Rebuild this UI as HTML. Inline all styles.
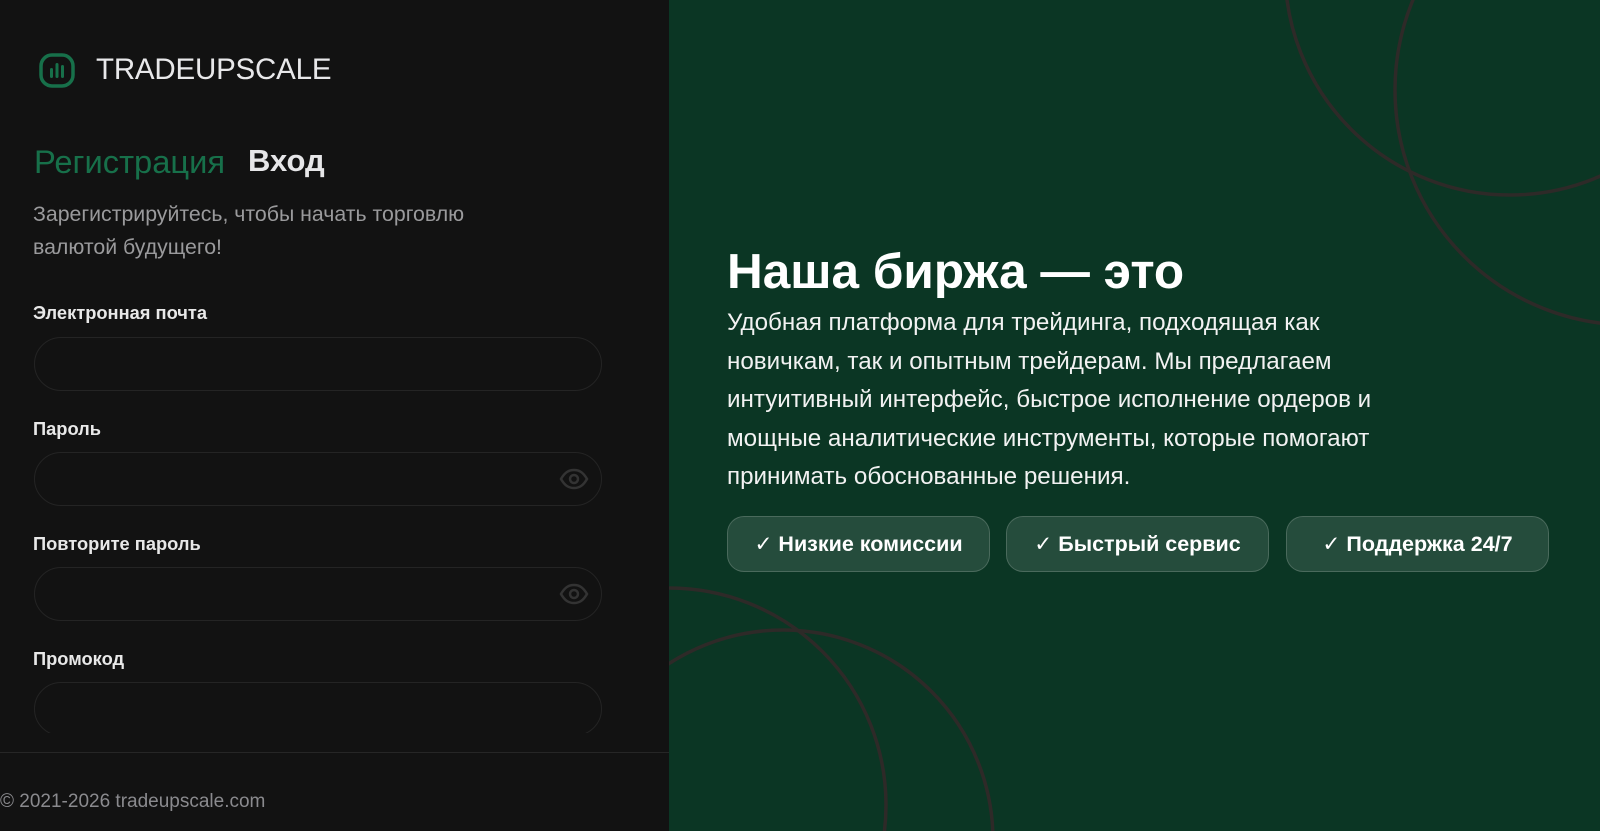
<!DOCTYPE html>
<html><head><meta charset="utf-8"><style>
*{margin:0;padding:0;box-sizing:border-box}
html,body{width:1600px;height:831px;overflow:hidden;background:#121212;font-family:"Liberation Sans","DejaVu Sans",sans-serif;position:relative}
.left{position:absolute;left:0;top:0;width:669px;height:831px;background:#121212;overflow:hidden}
.right{position:absolute;left:669px;top:0;width:931px;height:831px;background:#0b3624;overflow:hidden}
.logo{position:absolute;left:39px;top:53px;width:36px;height:35px}
.brand{position:absolute;left:96px;top:53px;font-size:29.5px;color:#e8e8ea;letter-spacing:-0.2px}
.tab1{position:absolute;left:34px;top:143px;font-size:32.7px;color:#17704a}
.tab2{position:absolute;left:248px;top:143px;font-size:31px;color:#e6e6e8;font-weight:bold}
.sub{position:absolute;left:33px;top:198px;font-size:21.3px;color:#9a9a9c;line-height:33px;white-space:nowrap}
.lbl{position:absolute;left:33px;font-size:18.3px;font-weight:bold;color:#e8e8e8}
.inp{position:absolute;left:34px;width:568px;height:54px;border:1px solid #242424;border-radius:27px;background:#121212}
.eye{position:absolute;right:12px;top:15px}
.divider{position:absolute;left:0;top:752px;width:669px;height:1px;background:#262626}
.foot{position:absolute;left:0;top:791px;font-size:19px;color:#8a8a8e;white-space:nowrap}
h1{position:absolute;left:727px;top:243px;font-size:49.5px;color:#fff;font-weight:bold;white-space:nowrap}
.p{position:absolute;left:727px;top:304px;font-size:24.2px;line-height:38.5px;color:#f2f2f2;white-space:nowrap}
.btn{position:absolute;top:516px;width:263px;height:56px;border-radius:17px;background:rgba(255,255,255,0.11);border:1px solid rgba(255,255,255,0.17);color:#fff;font-weight:bold;font-size:21.5px;display:flex;align-items:center;justify-content:center;white-space:nowrap}
svg.bg{position:absolute;left:0;top:0}
</style></head><body>
<div class="left">
<svg class="logo" viewBox="0 0 36 35"><rect x="2" y="2" width="32" height="31" rx="11" fill="none" stroke="#17704a" stroke-width="3.5"/><rect x="11" y="15" width="3" height="10" rx="1.5" fill="#17704a"/><rect x="16.5" y="10" width="3" height="15" rx="1.5" fill="#17704a"/><rect x="22" y="12" width="3" height="13" rx="1.5" fill="#17704a"/></svg>
<div class="brand">TRADEUPSCALE</div>
<div class="tab1">Регистрация</div>
<div class="tab2">Вход</div>
<div class="sub">Зарегистрируйтесь, чтобы начать торговлю<br>валютой будущего!</div>
<div class="lbl" style="top:302px">Электронная почта</div>
<div class="inp" style="top:337px"></div>
<div class="lbl" style="top:418px">Пароль</div>
<div class="inp" style="top:452px"><svg class="eye" width="30" height="22" viewBox="0 0 30 22"><path d="M2 11C6 4 10 2 15 2s9 2 13 9c-4 7-8 9-13 9S6 18 2 11z" fill="none" stroke="#333" stroke-width="2.5"/><circle cx="15" cy="11" r="4" fill="none" stroke="#333" stroke-width="2.5"/></svg></div>
<div class="lbl" style="top:533px">Повторите пароль</div>
<div class="inp" style="top:567px"><svg class="eye" width="30" height="22" viewBox="0 0 30 22"><path d="M2 11C6 4 10 2 15 2s9 2 13 9c-4 7-8 9-13 9S6 18 2 11z" fill="none" stroke="#333" stroke-width="2.5"/><circle cx="15" cy="11" r="4" fill="none" stroke="#333" stroke-width="2.5"/></svg></div>
<div class="lbl" style="top:648px">Промокод</div>
<div style="position:absolute;left:0;top:680px;width:669px;height:53px;overflow:hidden"><div class="inp" style="top:2px"></div></div>
<div class="divider"></div>
<div class="foot">© 2021-2026 tradeupscale.com</div>
</div>
<div class="right">
<svg class="bg" width="931" height="831" viewBox="669 0 931 831">
<g fill="none" stroke="#2e2a28" stroke-width="3.5">
<circle cx="1510" cy="-30" r="225"/>
<circle cx="1630" cy="90" r="235"/>
<circle cx="669" cy="805" r="217"/>
<circle cx="783" cy="840" r="210"/>
</g></svg>
</div>
<h1>Наша биржа — это</h1>
<div class="p">Удобная платформа для трейдинга, подходящая как<br>новичкам, так и опытным трейдерам. Мы предлагаем<br>интуитивный интерфейс, быстрое исполнение ордеров и<br>мощные аналитические инструменты, которые помогают<br>принимать обоснованные решения.</div>
<div class="btn" style="left:727px">✓ Низкие комиссии</div>
<div class="btn" style="left:1006px">✓ Быстрый сервис</div>
<div class="btn" style="left:1286px">✓ Поддержка 24/7</div>
</body></html>
